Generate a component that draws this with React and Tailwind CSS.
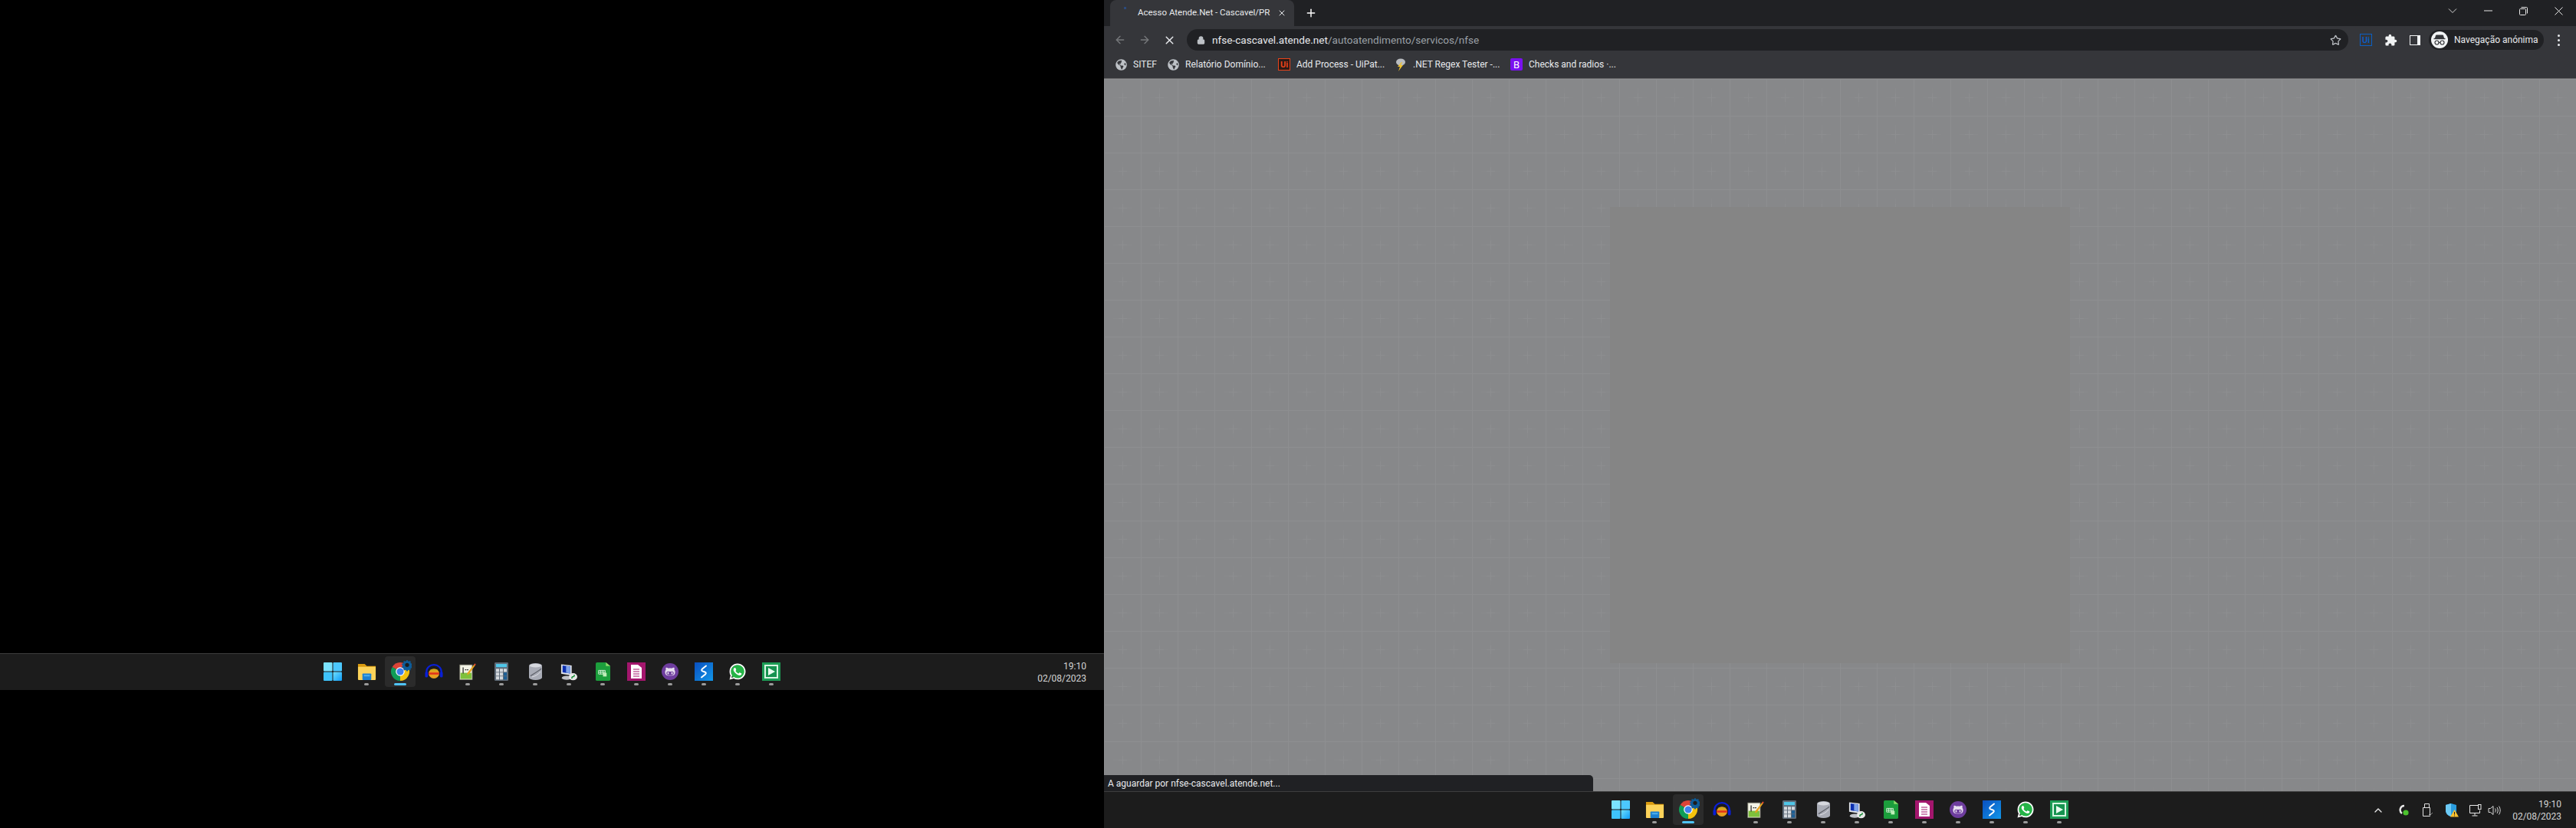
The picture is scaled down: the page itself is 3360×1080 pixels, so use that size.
import { ArrowLeft, ArrowRight, ChevronUp, Lock, Plus, Star, X } from 'lucide-react';
import { FaGithubAlt, FaGlobeAmericas, FaWhatsapp } from 'react-icons/fa';
import { MdExtension } from 'react-icons/md';

const StartIcon = () => (
  <svg width="24" height="24" viewBox="0 0 24 24">
    <defs>
      <linearGradient id="st" x1="0" y1="0" x2="1" y2="1">
        <stop offset="0" stopColor="#6fe0ff" />
        <stop offset="1" stopColor="#0f9bf5" />
      </linearGradient>
    </defs>
    <rect x="0" y="0" width="11.5" height="11.5" rx="1" fill="#7be3ff" />
    <rect x="12.5" y="0" width="11.5" height="11.5" rx="1" fill="#4cc8ff" />
    <rect x="0" y="12.5" width="11.5" height="11.5" rx="1" fill="#3ec3fb" />
    <rect x="12.5" y="12.5" width="11.5" height="11.5" rx="1" fill="url(#st)" />
  </svg>
);

const FolderIcon = () => (
  <svg width="25" height="22" viewBox="0 0 26 23" preserveAspectRatio="none">
    <path d="M1 1h9l3 3h12v18H1z" fill="#d99a0f" />
    <path d="M1 5h24v17a1 1 0 0 1-1 1H2a1 1 0 0 1-1-1z" fill="#fcd35a" />
    <rect x="7" y="14" width="12" height="9" rx="1" fill="#1c7fd0" />
    <rect x="9" y="16" width="8" height="2" fill="#4fb2ee" />
  </svg>
);

const ChromeIcon = () => (
  <svg width="30" height="30" viewBox="0 0 30 30">
    <path d="M4.6 9 L15 15 L25.4 9 A12 12 0 0 0 4.6 9Z" fill="#db4437" />
    <path d="M4.6 9 A12 12 0 0 0 15 27 L15 15Z" fill="#0f9d58" />
    <path d="M25.4 9 A12 12 0 0 1 15 27 L15 15Z" fill="#f4c20d" />
    <circle cx="15" cy="15" r="5.8" fill="#fff" />
    <circle cx="15" cy="15" r="4.6" fill="#3f80ee" />
    <path d="M24 -.5l1.7 2.3 2.7-.7.3 2.8 2.6 1.1-1.6 2.3 1.6 2.3-2.6 1.1-.3 2.8-2.7-.7-1.7 2.2-1.7-2.2-2.7.7-.3-2.8-2.6-1.1 1.6-2.3-1.6-2.3 2.6-1.1.3-2.8 2.7.7z" fill="#0d5c99" />
    <circle cx="24" cy="6.3" r="2.6" fill="#1c1c1c" />
  </svg>
);

const AudacityIcon = () => (
  <svg width="24" height="22" viewBox="0 0 26 26" preserveAspectRatio="none">
    <path d="M2.5 17V13a10.5 10.5 0 0 1 21 0v4" fill="none" stroke="#0a1fd6" strokeWidth="2.4" />
    <rect x="0.5" y="13" width="4" height="9" rx="2" fill="#0a1fd6" />
    <rect x="21.5" y="13" width="4" height="9" rx="2" fill="#0a1fd6" />
    <ellipse cx="13" cy="16" rx="7.5" ry="7.5" fill="#e8a020" />
    <path d="M5.5 16h15" stroke="#e0321c" strokeWidth="3" />
    <path d="M8 11h10" stroke="#c9b020" strokeWidth="2" />
  </svg>
);

const NotepadIcon = () => (
  <svg width="22" height="24" viewBox="0 0 26 30" preserveAspectRatio="none">
    <rect x="1" y="4" width="19" height="24" fill="#f3f3e6" stroke="#8a8a7a" />
    <path d="M2 17h17v10H2z" fill="#7ec13c" />
    <path d="M6 8v10M9 12h2M12 12h2" stroke="#222" strokeWidth="1.4" />
    <path d="M24 2l1.5 1.5L15 19l-3 1.5.6-3.4z" fill="#e8a21f" />
    <path d="M24 2l1.5 1.5-1.4 1.8-1.6-1.3z" fill="#d33" />
  </svg>
);

const CalcIcon = () => (
  <svg width="18" height="24" viewBox="0 0 18 29" preserveAspectRatio="none">
    <rect width="18" height="29" rx="1.5" fill="#5f6b78" />
    <rect x="2" y="2.5" width="14" height="5" fill="#4fc6e8" />
    {[0, 1, 2].map((r) => [0, 1, 2].map((c) => (
      <rect key={`${r}-${c}`} x={2 + c * 5} y={10 + r * 6} width="4" height="5" fill={c === 2 && r > 0 ? '#1d5f96' : '#d4d9de'} />
    )))}
  </svg>
);

const DbIcon = () => (
  <svg width="17" height="22" viewBox="0 0 18 28" preserveAspectRatio="none">
    <path d="M0 4a9 4 0 0 1 18 0v20a9 4 0 0 1-18 0z" fill="#a9acb6" />
    <ellipse cx="9" cy="4" rx="8" ry="3" fill="#d6d8de" />
    <path d="M2 21C6 18 12 14 17 9" stroke="#5f626a" strokeWidth="1.6" fill="none" />
    <path d="M4 23c4-1 9-4 12-9" stroke="#e4e4ea" strokeWidth="1" fill="none" />
  </svg>
);

const RemoteIcon = () => (
  <svg width="22" height="23" viewBox="0 0 24 30" preserveAspectRatio="none">
    <path d="M1 2l15 2v17L1 18z" fill="#dfe3ea" />
    <path d="M3 4l11 1.5v12L3 15.5z" fill="#0b2fb0" />
    <path d="M8 5l6 .8v11.4l-6-.9z" fill="#7fa3e8" />
    <ellipse cx="9" cy="25" rx="7" ry="3.4" fill="#bfc2c8" />
    <circle cx="18" cy="23" r="6" fill="#e8e8e8" />
    <path d="M16 26l1-3h2l1-3" stroke="#1c8f3a" strokeWidth="1.8" fill="none" />
  </svg>
);

const SheetIcon = () => (
  <svg width="19" height="24" viewBox="0 0 20 30" preserveAspectRatio="none">
    <path d="M2 0h12l6 6v22a2 2 0 0 1-2 2H2a2 2 0 0 1-2-2V2a2 2 0 0 1 2-2z" fill="#1c9e3c" />
    <path d="M14 0l6 6h-6z" fill="#8fdc6a" />
    <path d="M4 13h9v6H4zM4 16h9M7 13v6M10 13v6" fill="none" stroke="#e8f7e8" strokeWidth="1" />
    <rect x="10" y="17" width="5" height="6" fill="#bfeeb8" />
  </svg>
);

const PagesIcon = () => (
  <div className="flex h-[24px] w-[24px] items-center justify-center bg-[#a3166d]">
    <svg width="14" height="18" viewBox="0 0 14 18">
      <path d="M0 0h9l5 4v14H0z" fill="#fff" />
      <path d="M3 6h8M3 9h8M3 12h8M3 15h8" stroke="#a3166d" strokeWidth="1" />
    </svg>
  </div>
);

const GithubIcon = () => (
  <div className="flex h-[22px] w-[22px] items-center justify-center rounded-full bg-[#6e3d9e]">
    <FaGithubAlt size={14} className="text-[#e8e0f0]" />
  </div>
);

const SyncIcon = () => (
  <div className="flex h-[24px] w-[24px] items-center justify-center bg-[linear-gradient(135deg,#0a4fc0,#1296e8)]">
    <svg width="14" height="20" viewBox="0 0 14 20">
      <path d="M10 2.5 5 6.5c-2 2 0 3 2 3.5" fill="none" stroke="#fff" strokeWidth="2" strokeLinecap="round" />
      <path d="M4 17.5l5-4c2-2 0-3-2-3.5" fill="none" stroke="#fff" strokeWidth="2" strokeLinecap="round" />
    </svg>
  </div>
);

const WhatsappIcon = () => (
  <div className="relative flex h-[24px] w-[24px] items-center justify-center">
    <div className="absolute h-[19px] w-[19px] rounded-full bg-[#25b447]" />
    <FaWhatsapp size={24} className="relative text-white" />
  </div>
);

const PlayIcon = () => (
  <div className="flex h-[24px] w-[24px] items-center justify-center bg-[#1c9c55]">
    <div className="flex h-[18px] w-[18px] items-center justify-center border-2 border-[#d7f5e2] bg-[#169350]">
      <svg width="9" height="10" viewBox="0 0 9 10"><path d="M0 0l9 5-9 5z" fill="#e8fbef" /></svg>
    </div>
  </div>
);

const apps = [
  { id: 'start', Icon: StartIcon },
  { id: 'folder', Icon: FolderIcon, open: true },
  { id: 'chrome', Icon: ChromeIcon, active: true },
  { id: 'audacity', Icon: AudacityIcon },
  { id: 'notepad', Icon: NotepadIcon, open: true },
  { id: 'calc', Icon: CalcIcon, open: true },
  { id: 'db', Icon: DbIcon, open: true },
  { id: 'remote', Icon: RemoteIcon, open: true },
  { id: 'sheet', Icon: SheetIcon, open: true },
  { id: 'pages', Icon: PagesIcon, open: true },
  { id: 'github', Icon: GithubIcon, open: true },
  { id: 'sync', Icon: SyncIcon, open: true },
  { id: 'whatsapp', Icon: WhatsappIcon, open: true },
  { id: 'play', Icon: PlayIcon, open: true },
];

function TaskbarApp({ Icon, open, active }) {
  return (
    <div className="relative flex h-[47px] w-[44px] items-center justify-center">
      {active && <div className="absolute left-[2px] top-[3px] h-[40px] w-[40px] rounded-[4px] bg-[#2b2b2b]" />}
      <div className="relative -mt-[1px] flex items-center justify-center"><Icon /></div>
      {open && <div className="absolute bottom-[6px] left-[19px] h-[3px] w-[6px] rounded-full bg-[#9a9a9a]" />}
      {active && <div className="absolute bottom-[6px] left-[14px] h-[3px] w-[16px] rounded-full bg-[#4fc3f7]" />}
    </div>
  );
}

function Clock() {
  return (
    <div className="flex flex-col items-end text-[12px] leading-[16px] text-[#d4d4d4]">
      <span>19:10</span>
      <span>02/08/2023</span>
    </div>
  );
}

const TrayIcons = () => (
  <div className="mr-[15px] flex items-center">
    <ChevronUp size={16} strokeWidth={2} className="mr-[19px] text-[#e8e8e8]" />
    <svg width="14" height="16" viewBox="0 0 14 16" className="mr-[16px]">
      <path d="M7 2a5.5 5.5 0 0 0-3 10" fill="none" stroke="#e8e8e8" strokeWidth="2.4" />
      <circle cx="9" cy="11" r="3.6" fill="#4cc12e" />
    </svg>
    <svg width="14" height="18" viewBox="0 0 14 18" fill="none" stroke="#e0e0e0" className="mr-[17px]">
      <path d="M3.5.5h6v5h-6zM1.5 5.5h9v11h-9z" />
      <path d="M9 14l1.5 1.5L14 12" stroke="#888" />
    </svg>
    <svg width="18" height="18" viewBox="0 0 18 18" className="mr-[13px]">
      <path d="M7 0l7 2v7c0 4-3 7-7 8-4-1-7-4-7-8V2z" fill="#2a9ddf" />
      <path d="M7 0v17c-4-1-7-4-7-8V2z" fill="#6ccaf5" />
      <path d="M11.5 8l5.5 9.5H6z" fill="#fbc02d" />
      <path d="M11.5 11v3.5M11.5 15.5v1" stroke="#222" />
    </svg>
    <svg width="18" height="16" viewBox="0 0 18 16" fill="none" stroke="#e8e8e8" className="mr-[6px]">
      <path d="M11 1.5H.5v10h13V8M7 11.5v3M3.5 15h7" />
      <rect x="11.5" y=".5" width="3.5" height="6" />
    </svg>
    <svg width="17" height="14" viewBox="0 0 17 14" fill="none" stroke="#d8d8d8">
      <path d="M1 4.5h2.5L7 1.5v11l-3.5-3H1z" />
      <path d="M9.5 4.5c1 1.5 1 3.5 0 5M12 3c1.6 2.4 1.6 5.6 0 8M14.5 1.5c2.2 3.3 2.2 7.7 0 11" />
    </svg>
  </div>
);

function Taskbar({ tray, clockPad }) {
  return (
    <div className="grid h-[48px] grid-cols-[1fr_auto_1fr] items-center border-t border-[#3d3d3d] bg-[#1c1c1c]">
      <div />
      <div className="flex">
        {apps.map((app) => <TaskbarApp key={app.id} {...app} />)}
      </div>
      <div className={`flex items-center justify-end ${clockPad}`}>
        {tray && <TrayIcons />}
        <Clock />
      </div>
    </div>
  );
}

const Globe = () => <FaGlobeAmericas size={15} className="text-[#bdc1c6]" />;

const UiBookmark = () => (
  <div className="flex h-[16px] w-[16px] items-center justify-center border border-[#e8431a] bg-[#2a1a16] text-[11px] font-bold leading-none text-[#e8431a]">Ui</div>
);

const RegexIcon = () => (
  <svg width="16" height="18" viewBox="0 0 16 18">
    <ellipse cx="8" cy="6" rx="6" ry="4.5" fill="#b9bcc0" />
    <path d="M9 6 4 12h3l-2 6 6-8H8l2-4z" fill="#f0c330" />
  </svg>
);

const BootstrapIcon = () => (
  <div className="flex h-[16px] w-[16px] items-center justify-center rounded-[2px] bg-[#7a10f0] text-[13px] leading-none text-white">B</div>
);

const bookmarks = [
  { label: 'SITEF', Icon: Globe, width: 'w-[68px]' },
  { label: 'Relatório Domínio...', Icon: Globe, width: 'w-[145px]' },
  { label: 'Add Process - UiPat...', Icon: UiBookmark, width: 'w-[152px]' },
  { label: '.NET Regex Tester -...', Icon: RegexIcon, width: 'w-[151px]' },
  { label: 'Checks and radios ·...', Icon: BootstrapIcon, width: 'w-[140px]' },
];

const IncognitoIcon = () => (
  <svg width="16" height="14" viewBox="0 0 16 14" fill="none" stroke="#35363a">
    <path d="M3.5 1h9l1 4h-11z" fill="#35363a" />
    <path d="M0.5 5.5h15" strokeWidth="1.4" />
    <circle cx="4.5" cy="10.5" r="2.5" strokeWidth="1.2" />
    <circle cx="11.5" cy="10.5" r="2.5" strokeWidth="1.2" />
    <path d="M7 10.5h2" strokeWidth="1.2" />
  </svg>
);

function ChromeWindow() {
  return (
    <>
      <div className="flex h-[34px] items-start bg-[#202124] pl-[8px]">
        <div className="flex h-[34px] w-[240px] items-center rounded-t-[8px] bg-[#35363a] pl-[18px]">
          <div className="mb-[14px] h-[3px] w-[3px] bg-[#2c4a7c]" />
          <span className="ml-[15px] w-[183px] whitespace-nowrap text-[11.5px] text-[#e8eaed]">Acesso Atende.Net - Cascavel/PR</span>
          <X size={12} strokeWidth={2} className="-ml-[1px] text-[#e8eaed]" />
        </div>
        <div className="flex h-[34px] w-[44px] items-center justify-center">
          <Plus size={16} strokeWidth={2.2} className="text-white" />
        </div>
        <div className="flex-1" />
        <div className="flex h-[28px]">
          <div className="flex w-[46px] items-center justify-center">
            <svg width="12" height="8" viewBox="0 0 12 8" fill="none" stroke="#d4d4d4"><path d="M1 1.5l5 5 5-5" /></svg>
          </div>
          <div className="flex w-[46px] items-center justify-center">
            <svg width="11" height="2" viewBox="0 0 11 2"><path d="M0 1h11" stroke="#e8e8e8" /></svg>
          </div>
          <div className="flex w-[46px] items-center justify-center">
            <svg width="11" height="11" viewBox="0 0 11 11" fill="none" stroke="#e8e8e8"><path d="M.5 3.5a1 1 0 0 1 1-1h6a1 1 0 0 1 1 1v6a1 1 0 0 1-1 1h-6a1 1 0 0 1-1-1zM2.5.5h7a1 1 0 0 1 1 1v7" /></svg>
          </div>
          <div className="flex w-[46px] items-center justify-center">
            <svg width="11" height="11" viewBox="0 0 11 11" fill="none" stroke="#e8e8e8"><path d="M.5.5l10 10M10.5.5l-10 10" /></svg>
          </div>
        </div>
      </div>

      <div className="flex h-[34px] items-center bg-[#35363a] pl-[5px] pt-[2px]">
        <div className="flex w-[32px] justify-center"><ArrowLeft size={16} strokeWidth={2} className="text-[#77797c]" /></div>
        <div className="flex w-[32px] justify-center"><ArrowRight size={16} strokeWidth={2} className="text-[#77797c]" /></div>
        <div className="flex w-[32px] justify-center"><X size={17} strokeWidth={2} className="text-[#e8eaed]" /></div>
        <div className="ml-[7px] flex h-[28px] w-[1515px] items-center rounded-full bg-[#202124] pl-[13px] pr-[9px]">
          <Lock size={11} strokeWidth={2.5} fill="#bdc1c6" className="text-[#bdc1c6]" />
          <span className="ml-[9px] flex-1 text-[13.6px] text-[#e8eaed]">
            nfse-cascavel.atende.net<span className="text-[#9aa0a6]">/autoatendimento/servicos/nfse</span>
          </span>
          <Star size={15} strokeWidth={2} className="text-[#bdc1c6]" />
        </div>
        <div className="ml-[15px] flex h-[16px] w-[16px] items-center justify-center border-[1.5px] border-[#0a5fc4] text-[11px] font-semibold leading-none text-[#0a5fc4]">Ui</div>
        <MdExtension size={17} className="ml-[16px] text-[#f1f3f4]" />
        <div className="ml-[16px] flex h-[13px] w-[14px] justify-end border-[1.5px] border-[#f1f3f4]">
          <div className="w-[8px] bg-[#35363a]" />
          <div className="w-[3px] bg-[#f1f3f4]" />
        </div>
        <div className="ml-[11px] flex h-[26px] w-[150px] items-center rounded-full bg-[#202124] pl-[3px]">
          <div className="flex h-[22px] w-[22px] items-center justify-center rounded-full bg-[#f1f3f4]"><IncognitoIcon /></div>
          <span className="ml-[8px] text-[12px] text-[#e8eaed]">Navegação anónima</span>
        </div>
        <div className="ml-[18px] flex flex-col gap-[3px]">
          <div className="h-[3px] w-[3px] rounded-full bg-[#e8eaed]" />
          <div className="h-[3px] w-[3px] rounded-full bg-[#e8eaed]" />
          <div className="h-[3px] w-[3px] rounded-full bg-[#e8eaed]" />
        </div>
      </div>

      <div className="flex h-[34px] items-center bg-[#35363a] pb-[2px] pl-[14px]">
        {bookmarks.map(({ label, Icon, width }) => (
          <div key={label} className={`flex items-center gap-[8px] ${width}`}>
            <div className="flex h-[16px] w-[16px] items-center justify-center"><Icon /></div>
            <span className="whitespace-nowrap text-[12px] text-[#e8eaed]">{label}</span>
          </div>
        ))}
      </div>
    </>
  );
}

function PageOverlay() {
  return (
    <div className="relative flex flex-1 items-center justify-center border-t border-[#6c6c6e] bg-[#87888a]">
      <svg className="absolute inset-0 h-full w-full">
        <defs>
          <pattern id="grid" width="48" height="48" patternUnits="userSpaceOnUse">
            <path d="M.5 0v48M0 .5h48" stroke="#8e8f91" strokeWidth="1" fill="none" />
            <path d="M12 24.5h24M24.5 12v24" stroke="#898a8c" strokeWidth="1" fill="none" />
            <path d="M19 24.5h11M24.5 19v11" stroke="#8d8e90" strokeWidth="1" fill="none" />
          </pattern>
        </defs>
        <rect width="100%" height="100%" fill="url(#grid)" />
      </svg>
      <div className="relative h-[595px] w-[600px] bg-[#858585]" />
      <div className="absolute bottom-0 left-0 flex h-[21px] w-[638px] items-center rounded-tr-[5px] bg-[#202124] pl-[5px] text-[12px] text-[#e8eaed]">
        A aguardar por nfse-cascavel.atende.net...
      </div>
    </div>
  );
}

export default function App() {
  return (
    <div className="flex h-[1080px] w-[3360px] overflow-hidden bg-black font-['Roboto',sans-serif]">
      <div className="flex w-[1440px] flex-col pt-[852px]">
        <Taskbar clockPad="pr-[23px]" />
      </div>
      <div className="flex w-[1920px] flex-col">
        <ChromeWindow />
        <PageOverlay />
        <Taskbar tray clockPad="pr-[19px]" />
      </div>
    </div>
  );
}
